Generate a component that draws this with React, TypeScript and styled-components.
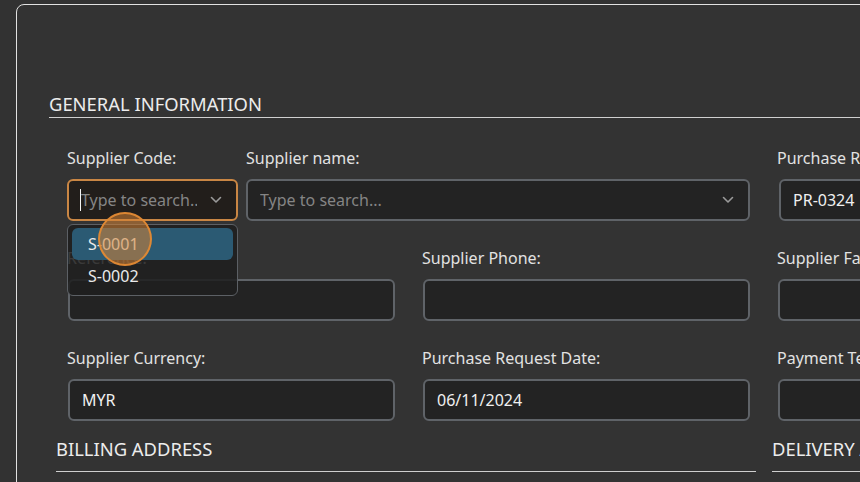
import React from "react";
import styled, { createGlobalStyle } from "styled-components";

const Global = createGlobalStyle`
  html, body { margin: 0; padding: 0; background: #323232; overflow: hidden; }
  body { font-family: "Noto Sans", "Open Sans", sans-serif; }
`;

const Page = styled.div`
  width: 860px;
  height: 482px;
  overflow: hidden;
  padding: 4px 0 0 16px;
  box-sizing: border-box;
`;

const Panel = styled.div`
  width: 1000px;
  height: 600px;
  border: 1px solid #e2e2e2;
  border-radius: 8px;
  background: #333333;
  padding: 87px 0 0 32px;
  box-sizing: border-box;
`;

const SectionTitle = styled.div<{ $pb: number }>`
  font-size: 18.4px;
  line-height: 24px;
  color: #ececec;
  padding-bottom: ${(p) => p.$pb}px;
  border-bottom: 1px solid #d0d0d0;
  white-space: nowrap;
`;

const FormGrid = styled.div`
  margin: 30px 0 0 18px;
  display: grid;
  grid-template-columns: 328px 328px 328px;
  column-gap: 27px;
  row-gap: 27px;
`;

const SplitCell = styled.div`
  grid-column: span 2;
  display: flex;
  gap: 8px;
`;

const Field = styled.div<{ $w?: number }>`
  position: relative;
  display: flex;
  flex-direction: column;
  ${(p) => (p.$w ? `width: ${p.$w}px; flex: none;` : `flex: 1;`)}
`;

const Label = styled.div`
  font-size: 16px;
  line-height: 20px;
  color: #e2e2e2;
  margin-bottom: 11px;
  white-space: nowrap;
`;

const Box = styled.div<{ $focus?: boolean; $inset?: number }>`
  height: 42px;
  box-sizing: border-box;
  margin-left: ${(p) => p.$inset ?? 0}px;
  border: 2px solid ${(p) => (p.$focus ? "#c98644" : "#5f6368")};
  border-radius: 6px;
  background: ${(p) => (p.$focus ? "#221e1b" : "#232323")};
  padding: 0 12px 0 ${(p) => (p.$focus ? 11 : 12)}px;
  display: flex;
  align-items: center;
  font-size: 16px;
  color: #f0f0f0;
  white-space: nowrap;
  overflow: hidden;
`;

const Placeholder = styled.span`
  flex: 1;
  min-width: 0;
  color: #858585;
  overflow: hidden;
  white-space: nowrap;
`;

const Caret = styled.span`
  width: 1px;
  height: 22px;
  background: #f4f4f4;
  flex: none;
`;

const Chevron = styled.svg<{ $gap: number }>`
  flex: none;
  margin-left: ${(p) => p.$gap}px;
  margin-right: 2px;
`;

const Dropdown = styled.div`
  position: absolute;
  top: 76px;
  left: 0;
  width: 171px;
  box-sizing: border-box;
  padding: 3px 4px;
  border: 1px solid #5c6065;
  border-radius: 6px;
  background: rgba(30, 30, 30, 0.86);
  z-index: 2;
`;

const Option = styled.div<{ $active?: boolean }>`
  height: 32px;
  display: flex;
  align-items: center;
  padding-left: 16px;
  border-radius: 6px;
  font-size: 16px;
  color: #eaeaea;
  background: ${(p) => (p.$active ? "#2b5a73" : "transparent")};
`;

const ClickMark = styled.div`
  position: absolute;
  left: 31px;
  top: 64px;
  width: 54px;
  height: 54px;
  box-sizing: border-box;
  border-radius: 50%;
  border: 2px solid rgba(226, 138, 52, 0.95);
  background: rgba(214, 132, 52, 0.55);
  z-index: 3;
`;

const AddressRow = styled.div`
  margin: 16px 0 0 7px;
  display: grid;
  grid-template-columns: 700px 300px;
  column-gap: 16px;
`;

const Down = ({ gap }: { gap: number }) => (
  <Chevron $gap={gap} width="12" height="8" viewBox="0 0 12 8">
    <polyline points="1.5,1.5 6,6 10.5,1.5" fill="none" stroke="#9a9a9a" strokeWidth="1.6" strokeLinecap="round" strokeLinejoin="round" />
  </Chevron>
);

export default function App() {
  return (
    <>
      <Global />
      <Page>
        <Panel>
          <SectionTitle $pb={1}>GENERAL INFORMATION</SectionTitle>
          <FormGrid>
            <SplitCell>
              <Field $w={171}>
                <Label>Supplier Code:</Label>
                <Box $focus>
                  <Caret />
                  <Placeholder>Type to search...</Placeholder>
                  <Down gap={13} />
                </Box>
                <Dropdown>
                  <Option $active>S-0001</Option>
                  <Option>S-0002</Option>
                </Dropdown>
                <ClickMark />
              </Field>
              <Field>
                <Label>Supplier name:</Label>
                <Box>
                  <Placeholder>Type to search...</Placeholder>
                  <Down gap={8} />
                </Box>
              </Field>
            </SplitCell>
            <Field>
              <Label>Purchase Request No.:</Label>
              <Box $inset={2}>PR-0324</Box>
            </Field>

            <Field>
              <Label>Reference:</Label>
              <Box $inset={1} />
            </Field>
            <Field>
              <Label>Supplier Phone:</Label>
              <Box $inset={1} />
            </Field>
            <Field>
              <Label>Supplier Fax:</Label>
              <Box $inset={1} />
            </Field>

            <Field>
              <Label>Supplier Currency:</Label>
              <Box $inset={1}>MYR</Box>
            </Field>
            <Field>
              <Label>Purchase Request Date:</Label>
              <Box $inset={1}>06/11/2024</Box>
            </Field>
            <Field>
              <Label>Payment Term:</Label>
              <Box $inset={1} />
            </Field>
          </FormGrid>
          <AddressRow>
            <SectionTitle $pb={10}>BILLING ADDRESS</SectionTitle>
            <SectionTitle $pb={10}>DELIVERY ADDRESS</SectionTitle>
          </AddressRow>
        </Panel>
      </Page>
    </>
  );
}
